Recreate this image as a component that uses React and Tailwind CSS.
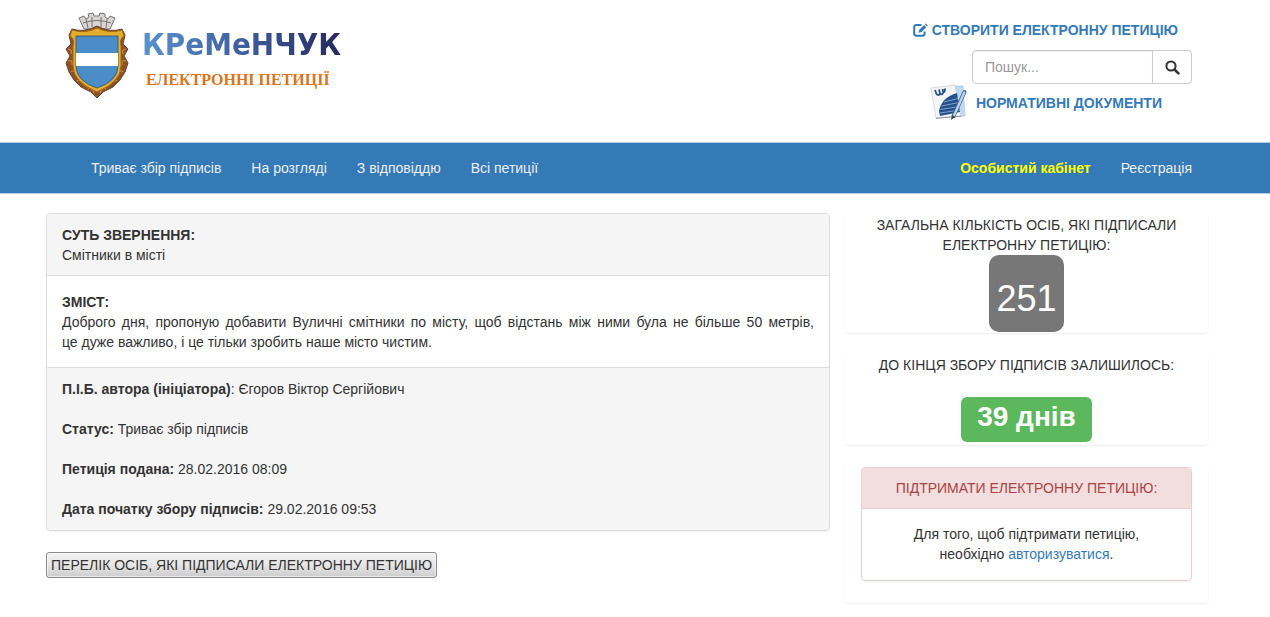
import React from "react";

function CrestIcon() {
  return (
    <svg className="block h-[88px] w-[66px]" viewBox="0 0 66 88" aria-hidden="true">
      <g fill="#d9d5d3" stroke="#77716f" strokeWidth="1">
        <path d="M20 17 L15 6 L20 4 L22 7 L25 5 L24 2 L29 1 L30 4 L35 4 L36 1 L41 2 L41 5 L44 7 L46 4 L51 6 L46 17 Z" />
        <path d="M19 11 Q33 6 47 11 M22 7 L24 16 M28 5 V15 M37 5 V15 M43 7 L42 16" fill="none" />
      </g>
      <path
        d="M8 17 Q20 21 33 14 Q46 21 58 17 L61 23 L59 32 L64 37 L60 44 L64 51 L61 60 L56 68 L49 75 L39 80 L33 86 L27 80 L17 75 L10 68 L5 60 L2 51 L6 44 L2 37 L7 32 L5 23 Z"
        fill="#8f5128"
        stroke="#6f4325"
        strokeWidth="1"
      />
      <g fill="none" stroke="#c98a4a" strokeWidth="1.2">
        <path d="M4 37 q5 1 3 5 M4 49 q5 -2 4 4 M7 60 q4 -3 6 3 M13 69 q4 -3 7 3 M24 77 q4 -3 6 4" />
        <path d="M62 37 q-5 1 -3 5 M62 49 q-5 -2 -4 4 M59 60 q-4 -3 -6 3 M53 69 q-4 -3 -7 3 M42 77 q-4 -3 -6 4" />
      </g>
      <path
        d="M8 18 Q21 22 33 16 Q45 22 58 18 L60 24 Q55 27 57 34 V54 Q57 70 33 80 Q9 70 9 54 V34 Q11 27 6 24 Z"
        fill="#e5ad2c"
        stroke="#9a6a1c"
        strokeWidth="1"
      />
      <path d="M12 24 H54 V54 Q54 69 33 76 Q12 69 12 54 Z" fill="#4a8dc8" stroke="#33536e" strokeWidth="0.8" />
      <path d="M12 41 H54 V54 H12 Z" fill="#fff" />
    </svg>
  );
}

function EditIcon() {
  return (
    <svg className="h-[14px] w-[15px]" viewBox="0 0 15 14" aria-hidden="true">
      <path d="M8.5 2 H3.5 Q1.2 2 1.2 4.3 V10.5 Q1.2 12.8 3.5 12.8 H9.3 Q11.6 12.8 11.6 10.5 V8.5" fill="none" stroke="currentColor" strokeWidth="2" />
      <path d="M5.5 9.8 L6.3 6.7 L11 2 L13.3 4.3 L8.6 9 Z M11.7 1.3 L12.6 0.4 L14.9 2.7 L14 3.6 Z" fill="currentColor" />
    </svg>
  );
}

function SearchIcon() {
  return (
    <svg className="h-[15px] w-[15px]" viewBox="0 0 15 15" aria-hidden="true">
      <circle cx="6" cy="6" r="4.6" fill="none" stroke="currentColor" strokeWidth="2" />
      <path d="M9.5 9.5 L13.4 13.4" stroke="currentColor" strokeWidth="2.6" strokeLinecap="round" />
    </svg>
  );
}

function DocumentIcon() {
  return (
    <svg className="h-[38px] w-[38px]" viewBox="0 0 38 38" aria-hidden="true">
      <path d="M22 2 L33 2 L35 32 L22 33 Z" fill="#bfd9f2" stroke="#a3c2dd" strokeWidth="0.6" />
      <path d="M1 4 L25 1 L31 32 L6 34 Z" fill="#f3f5f8" stroke="#c9ced4" strokeWidth="0.7" />
      <path d="M6 34.300 L31 32.300" stroke="#8b9299" strokeWidth="1" />
      <path d="M5 6 L6.500 10 Q8.500 12.500 10 9.500 L9 5.500 M10 9.500 Q12.500 11.500 13.300 8.500 L12.500 5 M13.300 8.500 Q15.500 7.500 14.800 4.500" fill="none" stroke="#28518c" strokeWidth="1.8" />
      <path d="M9 27 Q12 13 27 9 L30 28 L10 32 Z" fill="#24518d" />
      <path d="M14 18 L28 14.500 M11.500 22 L29 18.500 M10.500 25.500 L29.500 22.500 M10 29 L30 26" stroke="#8dabd0" strokeWidth="0.9" />
      <path d="M34.500 8 L23.500 32" stroke="#44607f" strokeWidth="4" strokeLinecap="round" />
      <path d="M34.300 8.500 L24 31.500" stroke="#b8d4ee" strokeWidth="2.400" strokeLinecap="round" />
      <path d="M22 31 L21 36 L25.500 33 Z" fill="#3c4a5a" />
    </svg>
  );
}

const navLinks = ["Триває збір підписів", "На розгляді", "З відповіддю", "Всі петиції"];

const details = [
  { label: "Статус:", value: "Триває збір підписів" },
  { label: "Петиція подана:", value: "28.02.2016 08:09" },
  { label: "Дата початку збору підписів:", value: "29.02.2016 09:53" },
];

function SideBox({ className = "", children }) {
  return (
    <section className={`rounded border border-transparent text-center shadow-[0_1px_2px_rgba(0,0,0,0.07)] ${className}`}>
      {children}
    </section>
  );
}

function Header() {
  return (
    <header className="pr-4">
      <div className="mx-auto flex max-w-[1162px] justify-between px-4 pb-5">
        <a href="#" className="flex items-start gap-3 pt-3 pl-[2px]">
          <CrestIcon />
          <div className="flex flex-col pt-2">
            <span className="bg-gradient-to-r from-[#5b93cb] via-[#3f5f9f] to-[#272a5c] bg-clip-text font-['Liberation_Sans_Narrow','DejaVu_Sans_Condensed',sans-serif] text-[31px] leading-[48px] font-bold text-transparent">
              КРеМеНЧУК
            </span>
            <span className="pl-1 font-['Liberation_Serif',serif] text-[16px] leading-6 font-bold text-[#d9751c]">
              ЕЛЕКТРОННІ ПЕТИЦІЇ
            </span>
          </div>
        </a>
        <div className="flex flex-col items-end pt-5 font-bold text-[#337ab7]">
          <a href="#" className="mr-[14px] flex items-center gap-1 leading-5">
            <EditIcon />
            СТВОРИТИ ЕЛЕКТРОННУ ПЕТИЦІЮ
          </a>
          <form className="mt-[10px] flex h-[34px] w-[220px] font-normal" onSubmit={(e) => e.preventDefault()}>
            <input
              type="search"
              aria-label="Пошук"
              placeholder="Пошук..."
              className="min-w-0 flex-1 rounded-l border border-[#ccc] px-3 text-[#555] shadow-[inset_0_1px_1px_rgba(0,0,0,0.075)] placeholder:text-[#999]"
            />
            <button type="submit" aria-label="Знайти" className="-ml-px flex w-10 items-center justify-center rounded-r border border-[#ccc] text-[#333]">
              <SearchIcon />
            </button>
          </form>
          <a href="#" className="mr-[30px] flex items-center gap-2">
            <DocumentIcon />
            НОРМАТИВНІ ДОКУМЕНТИ
          </a>
        </div>
      </div>
    </header>
  );
}

function NavBar() {
  return (
    <nav className="border-y border-[#b5cfe6] bg-[#337ab7] pr-4 text-[#eee]">
      <div className="mx-auto flex h-[50px] max-w-[1162px] items-center justify-between pr-4 pl-[45px]">
        <ul className="flex gap-[30px]">
          {navLinks.map((label) => (
            <li key={label}>
              <a href="#">{label}</a>
            </li>
          ))}
        </ul>
        <ul className="flex gap-[30px]">
          <li>
            <a href="#" className="font-bold text-[#ffff00]">Особистий кабінет</a>
          </li>
          <li>
            <a href="#">Реєстрація</a>
          </li>
        </ul>
      </div>
    </nav>
  );
}

export default function App() {
  return (
    <div className="bg-white font-['Liberation_Sans',Arial,sans-serif] text-[14px] leading-5 text-[#333]">
      <Header />
      <NavBar />
      <main className="pt-[19px] pr-4 pb-3">
        <div className="mx-auto flex max-w-[1162px] items-start gap-[15px]">
          <div className="min-w-0 flex-1">
            <article className="rounded border border-[#ddd] shadow-[0_1px_1px_rgba(0,0,0,0.05)]">
              <header className="rounded-t border-b border-[#ddd] bg-[#f5f5f5] px-[15px] pt-[11px] pb-[10px]">
                <h1 className="font-bold">СУТЬ ЗВЕРНЕННЯ:</h1>
                <p>Смітники в місті</p>
              </header>
              <div className="px-[15px] pt-4 pb-[15px]">
                <h2 className="font-bold">ЗМІСТ:</h2>
                <p className="text-justify">
                  Доброго дня, пропоную добавити Вуличні смітники по місту, щоб відстань між ними була не більше 50
                  метрів, <span className="whitespace-nowrap">це дуже</span> важливо, і це тільки зробить наше місто
                  чистим.
                </p>
              </div>
              <footer className="flex flex-col gap-5 rounded-b border-t border-[#ddd] bg-[#f5f5f5] px-[15px] py-[11px]">
                <p>
                  <b>П.І.Б. автора (ініціатора)</b>: Єгоров Віктор Сергійович
                </p>
                {details.map(({ label, value }) => (
                  <p key={label}>
                    <b>{label}</b> {value}
                  </p>
                ))}
              </footer>
            </article>
            <button
              type="button"
              className="mt-[21px] rounded-[3px] border border-[#8a8a8a] bg-gradient-to-b from-[#f2f2f2] via-[#e6e6e6] to-[#cdcdcd] px-1 py-[2px] shadow-[inset_0_0_0_1px_rgba(255,255,255,0.6)]"
            >
              ПЕРЕЛІК ОСІБ, ЯКІ ПІДПИСАЛИ ЕЛЕКТРОННУ ПЕТИЦІЮ
            </button>
          </div>

          <aside className="flex w-[363px] shrink-0 flex-col gap-[21px]">
            <SideBox className="px-4 pt-px">
              <p>ЗАГАЛЬНА КІЛЬКІСТЬ ОСІБ, ЯКІ ПІДПИСАЛИ ЕЛЕКТРОННУ ПЕТИЦІЮ:</p>
              <span className="inline-block rounded-[10px] bg-[#777] px-[7px] pt-6 pb-[13px] align-top text-[36px] leading-10 text-white">
                251
              </span>
            </SideBox>
            <SideBox className="px-4 pb-[2px]">
              <p>ДО КІНЦЯ ЗБОРУ ПІДПИСІВ ЗАЛИШИЛОСЬ:</p>
              <span className="mt-[22px] inline-block rounded-md bg-[#5cb85c] px-4 pb-[5px] align-top text-[28px] leading-10 font-bold text-white">
                39 днів
              </span>
            </SideBox>
            <SideBox className="px-[15px] pb-[21px]">
              <div className="rounded border border-[#ebccd1] shadow-[0_1px_1px_rgba(0,0,0,0.05)]">
                <h3 className="rounded-t border-b border-[#ebccd1] bg-[#f2dede] py-[10px] text-[#a94442]">
                  ПІДТРИМАТИ ЕЛЕКТРОННУ ПЕТИЦІЮ:
                </h3>
                <p className="px-[15px] pt-[15px] pb-4">
                  Для того, щоб підтримати петицію,{" "}
                  <span className="whitespace-nowrap">
                    необхідно{" "}
                    <a href="#" className="text-[#337ab7]">авторизуватися</a>.
                  </span>
                </p>
              </div>
            </SideBox>
          </aside>
        </div>
      </main>
    </div>
  );
}
